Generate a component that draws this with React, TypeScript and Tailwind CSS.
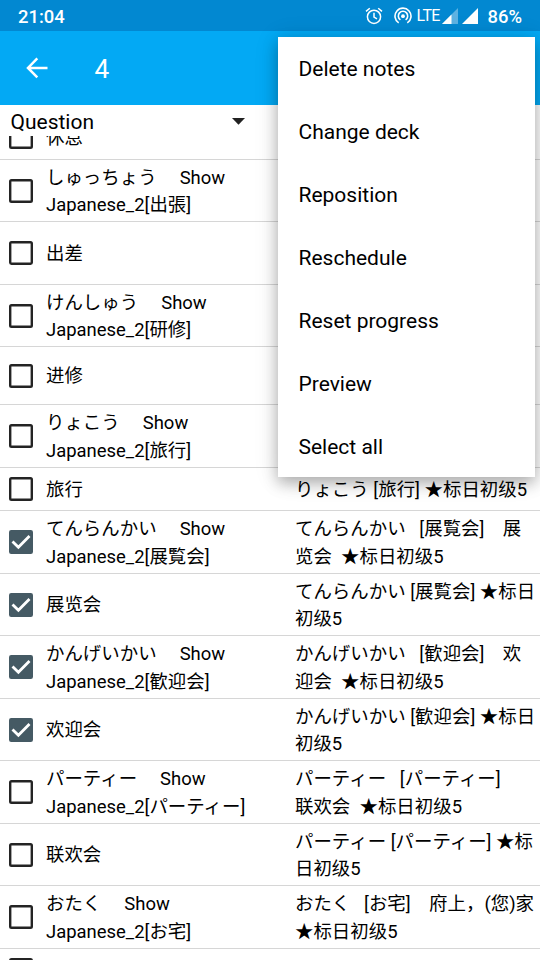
import React from "react";

type Row = { height: string; checked?: boolean; left: string[]; right?: string[] };

const rows: Row[] = [
  { height: "h-[62px]", left: ["しゅっちょう\u3000 Show", "Japanese_2[出張]"] },
  { height: "h-[63px]", left: ["出差"] },
  { height: "h-[62px]", left: ["けんしゅう\u3000 Show", "Japanese_2[研修]"] },
  { height: "h-[58px]", left: ["进修"] },
  { height: "h-[63px]", left: ["りょこう\u3000 Show", "Japanese_2[旅行]"] },
  { height: "h-[43px]", left: ["旅行"], right: ["りょこう [旅行] ★标日初级5"] },
  { height: "h-[63px]", checked: true, left: ["てんらんかい\u3000 Show", "Japanese_2[展覧会]"], right: ["てんらんかい   [展覧会]\u3000展", "览会  ★标日初级5"] },
  { height: "h-[62px]", checked: true, left: ["展览会"], right: ["てんらんかい [展覧会] ★标日", "初级5"] },
  { height: "h-[63px]", checked: true, left: ["かんげいかい\u3000 Show", "Japanese_2[歓迎会]"], right: ["かんげいかい   [歓迎会]\u3000欢", "迎会  ★标日初级5"] },
  { height: "h-[62px]", checked: true, left: ["欢迎会"], right: ["かんげいかい [歓迎会] ★标日", "初级5"] },
  { height: "h-[63px]", left: ["パーティー\u3000 Show", "Japanese_2[パーティー]"], right: ["パーティー   [パーティー]", "联欢会  ★标日初级5"] },
  { height: "h-[62px]", left: ["联欢会"], right: ["パーティー [パーティー] ★标", "日初级5"] },
  { height: "h-[63px]", left: ["おたく\u3000 Show", "Japanese_2[お宅]"], right: ["おたく   [お宅]\u3000府上，(您)家", "★标日初级5"] },
  { height: "h-[43px]", left: [] },
];

const menuItems = ["Delete notes", "Change deck", "Reposition", "Reschedule", "Reset progress", "Preview", "Select all"];

function Checkbox({ checked }: { checked?: boolean }) {
  return (
    <svg className="ml-[9px] size-6 shrink-0" viewBox="0 0 24 24" fill="none">
      {checked ? (
        <>
          <rect width="24" height="24" rx="2.2" fill="#455a64" />
          <path d="M3.5 11.4 9.4 17.2 20.5 6.1" stroke="#fff" strokeWidth="2.8" />
        </>
      ) : (
        <rect x="1.2" y="1.2" width="21.6" height="21.6" rx="1.3" stroke="#242424" strokeWidth="2.4" />
      )}
    </svg>
  );
}

function Lines({ lines }: { lines: string[] }) {
  return (
    <>
      {lines.map((line, i) => (
        <div key={i} className="whitespace-pre leading-[27.4px]">{line}</div>
      ))}
    </>
  );
}

function CardRow({ row }: { row: Row }) {
  return (
    <div className={`flex shrink-0 items-center border-b border-[#d6d6d6] ${row.height}`}>
      <Checkbox checked={row.checked} />
      <div className="ml-[13px] w-[249px] shrink-0 pt-[3px]"><Lines lines={row.left} /></div>
      <div className="min-w-0 flex-1 pt-[3px]"><Lines lines={row.right ?? []} /></div>
    </div>
  );
}

function StatusBar() {
  return (
    <div className="flex h-[31px] items-center bg-[#0288d1] pl-[18px] pr-[18px] pt-[2px] text-[18.4px] font-medium text-white">
      <span>21:04</span>
      <div className="ml-auto flex items-center">
        <svg className="mb-[1px] mr-[11px] h-[18px] w-[18px]" viewBox="0 0 18 18" fill="none" stroke="#fff" strokeWidth="1.5">
          <circle cx="9" cy="9.8" r="6.6" />
          <path d="M9 5.8v4.3l3 1.8M1 4.4 4.8 1.2M17 4.4l-3.8-3.2" />
        </svg>
        <svg className="mr-[5px] h-[18px] w-[18px]" viewBox="0 0 18 18" fill="none" stroke="#fff" strokeWidth="1.6">
          <path d="M4.7 15.9A8 8 0 1 1 13.3 15.9" />
          <path d="M6.4 12.9A4.7 4.7 0 1 1 11.6 12.9" />
          <circle cx="9" cy="9.2" r="1.9" fill="#fff" stroke="none" />
        </svg>
        <span className="w-[23px] text-[16px] font-normal leading-[18px] tracking-[-0.6px]">LTE</span>
        <svg className="mb-[1px] ml-[2px] h-[16px] w-[16px]" viewBox="0 0 16 16">
          <path d="M16 0V16H0Z" fill="#5db2e2" />
          <path d="M9.5 6.5V16H0Z" fill="#fff" />
        </svg>
        <svg className="mb-[1px] ml-[4px] mr-[10px] h-[16px] w-[16px]" viewBox="0 0 16 16"><path d="M16 0V16H0Z" fill="#fff" /></svg>
        <span>86%</span>
      </div>
    </div>
  );
}

export default function App() {
  return (
    <div className="relative flex h-[960px] w-[540px] flex-col overflow-hidden bg-white font-[Roboto,'Noto_Sans_CJK_SC',sans-serif] text-[18.45px] text-black">
      <StatusBar />
      <header className="flex h-[74px] shrink-0 items-center bg-[#03a9f4] text-white">
        <svg className="ml-[26px] h-[22px] w-[22px]" viewBox="0 0 22 22" fill="none" stroke="#fff" strokeWidth="2.5">
          <path d="M21.5 11H2.4M11.3 1.3 2 11l9.3 9.3" />
        </svg>
        <span className="ml-[46.5px] pt-[4px] text-[26.25px]">4</span>
      </header>
      <div className="flex h-[31px] shrink-0 items-center pl-[10.5px] text-[21px]">
        <span className="mt-[3px] w-[221.5px] leading-[26px]">Question</span>
        <svg className="mt-[2px] h-[7px] w-[13px]" viewBox="0 0 13 7"><path d="M0 0H13L6.5 6.8Z" fill="#222" /></svg>
      </div>
      <main className="flex min-h-0 flex-1 flex-col overflow-hidden">
        <div className="flex h-[24px] shrink-0 items-end overflow-hidden border-b border-[#d6d6d6] pb-[10px]">
          <Checkbox />
          <div className="-mb-[3px] ml-[13px] leading-[27px]">休息</div>
        </div>
        {rows.map((row, i) => <CardRow key={i} row={row} />)}
      </main>
      <nav className="absolute left-[278px] top-[37px] flex h-[440px] w-[257px] flex-col bg-white pt-[1px] text-[21px] text-black shadow-[0_6px_14px_rgba(0,0,0,0.27),0_2px_24px_rgba(0,0,0,0.12)]">
        {menuItems.map((item) => (
          <div key={item} className="flex h-[63px] shrink-0 items-center pl-[20.5px]">{item}</div>
        ))}
      </nav>
    </div>
  );
}
